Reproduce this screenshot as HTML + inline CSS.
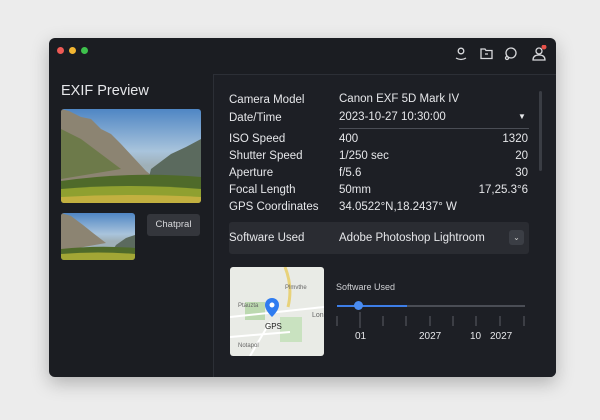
<!DOCTYPE html>
<html><head><style>
*{margin:0;padding:0;box-sizing:border-box}
body{width:600px;height:420px;background:#ececec;font-family:"Liberation Sans",sans-serif;position:relative;overflow:hidden}
.win{position:absolute;left:49px;top:38px;width:507px;height:339px;background:#1b1d22;border-radius:6px;box-shadow:0 6px 18px rgba(0,0,0,.25);overflow:hidden}
.dot{position:absolute;top:9px;width:7px;height:7px;border-radius:50%}
.t{position:absolute;color:#e6e7ea;font-size:11.5px;white-space:nowrap}
.panel{position:absolute;left:164px;top:36px;width:343px;height:303px;background:#1d1f25;border-left:1px solid #2c2f36;border-top:1px solid #2c2f36}
.img{position:absolute;border-radius:3px;overflow:hidden;background:linear-gradient(180deg,#4f86c4 0%,#a9c4dc 45%,#9fb0b8 60%)}
</style></head><body>
<div class="win">
<div class="dot" style="left:8px;background:#ee5a55"></div>
<div class="dot" style="left:20px;background:#f2b532"></div>
<div class="dot" style="left:32px;background:#3ec14c"></div>
<svg style="position:absolute;left:403px;top:7px" width="100" height="18" fill="none" stroke="#d8d9dc" stroke-width="1.3">
<circle cx="9" cy="6" r="2.8"/><path d="M4 13q5 3 10 0"/>
<path d="M29 4h4l1 1.5h6v8h-11z"/><path d="M33 9h3"/>
<circle cx="59" cy="8" r="5"/><circle cx="55" cy="13" r="1.5"/>
<circle cx="87" cy="6" r="3"/><path d="M81 15q0-5 6-5t6 5z"/>
<circle cx="92" cy="2" r="2.5" fill="#e8524a" stroke="none"/>
</svg>
<div class="t" style="left:12px;top:45px;font-size:14.5px">EXIF Preview</div>
<div class="img" style="left:12px;top:71px;width:140px;height:94px">
<svg width="140" height="94"><path d="M0 0L8 2 20 8 30 10 40 20 50 25 60 35 72 48 85 62 95 70 0 80z" fill="#8c8472"/><path d="M0 20L20 30 40 45 60 60 0 70z" fill="#6d7a4a"/><path d="M90 60L110 45 125 38 140 30V80H85z" fill="#5b6a5e"/><path d="M0 72Q70 62 140 68V94H0z" fill="#4f6a2a"/><path d="M0 80Q70 74 140 80V94H0z" fill="#8fa030"/><path d="M0 88Q70 84 140 88V94H0z" fill="#c2b040"/></svg></div>
<div class="img" style="left:12px;top:175px;width:74px;height:47px">
<svg width="74" height="47"><path d="M0 0L10 3 22 12 32 20 45 30 0 38z" fill="#8c8472"/><path d="M55 32L65 25 74 22V40H50z" fill="#5b6a5e"/><path d="M0 36Q37 32 74 35V47H0z" fill="#4f6a2a"/><path d="M0 41Q37 38 74 41V47H0z" fill="#a2a635"/></svg></div>
<div style="position:absolute;left:98px;top:176px;width:53px;height:22px;background:#34363c;border-radius:3px;color:#d8d9dc;font-size:9.5px;text-align:center;line-height:22px">Chatpral</div>
<div class="panel">
<div style="position:absolute;right:14px;top:16px;width:3px;height:80px;background:#3a3d44;border-radius:2px"></div>
<div class="t" style="left:15px;top:19px">Camera Model</div><div class="t" style="left:125px;top:18px">Canon EXF 5D Mark IV</div>
<div class="t" style="left:15px;top:37px">Date/Time</div><div class="t" style="left:125px;top:36px">2023-10-27 10:30:00</div>
<div class="t" style="left:304px;top:37px;font-size:8px">▼</div>
<div style="position:absolute;left:125px;top:53px;width:190px;height:1px;background:#4a4d55"></div>
<div class="t" style="left:15px;top:58px">ISO Speed</div><div class="t" style="left:125px;top:58px">400</div><div class="t" style="right:28px;top:58px">1320</div>
<div class="t" style="left:15px;top:75px">Shutter Speed</div><div class="t" style="left:125px;top:75px">1/250 sec</div><div class="t" style="right:28px;top:75px">20</div>
<div class="t" style="left:15px;top:92px">Aperture</div><div class="t" style="left:125px;top:92px">f/5.6</div><div class="t" style="right:28px;top:92px">30</div>
<div class="t" style="left:15px;top:109px">Focal Length</div><div class="t" style="left:125px;top:109px">50mm</div><div class="t" style="right:28px;top:109px">17,25.3°6</div>
<div class="t" style="left:15px;top:126px">GPS Coordinates</div><div class="t" style="left:125px;top:126px">34.0522°N,18.2437° W</div>
<div style="position:absolute;left:15px;top:147px;width:300px;height:32px;background:#2a2c32;border-radius:3px"></div>
<div class="t" style="left:15px;top:157px">Software Used</div><div class="t" style="left:125px;top:157px">Adobe Photoshop Lightroom</div>
<div style="position:absolute;left:295px;top:155px;width:15px;height:15px;background:#3b3e45;border-radius:3px;color:#ccc;font-size:8px;text-align:center;line-height:15px">⌄</div>
<div style="position:absolute;left:16px;top:192px;width:94px;height:89px;background:#e9ebe6;border-radius:3px;overflow:hidden">
<svg width="94" height="89"><path d="M55 0q8 20 3 40" stroke="#e8d27a" stroke-width="3" fill="none"/><rect x="15" y="35" width="20" height="18" fill="#bcd9b0"/><rect x="50" y="50" width="22" height="25" fill="#c9e2c0"/><path d="M0 50L94 40M20 89L40 55M0 70L60 65" stroke="#fff" stroke-width="2"/>
<text x="8" y="40" font-size="6" fill="#666">Ptauzta</text><text x="55" y="22" font-size="6" fill="#666">Plmvthe</text><text x="8" y="80" font-size="6" fill="#666">Notapol</text><text x="82" y="50" font-size="7" fill="#666">Lon</text>
<path d="M49 38a7 7 0 1 0 -14 0q0 5 7 12q7-7 7-12z" fill="#2f7cf0"/><circle cx="42" cy="38" r="2.5" fill="#fff"/>
<text x="35" y="62" font-size="8" fill="#222" font-family="Liberation Sans">GPS</text></svg></div>
<div class="t" style="left:122px;top:207px;font-size:9px;color:#cfd0d4">Software Used</div>
<div style="position:absolute;left:123px;top:230px;width:188px;height:2px;background:#4a4d55"></div>
<div style="position:absolute;left:123px;top:230px;width:70px;height:2px;background:#3d7ee8"></div>
<div style="position:absolute;left:140px;top:226px;width:9px;height:9px;border-radius:50%;background:#4a8cf0"></div>
<svg style="position:absolute;left:122px;top:237px" width="192" height="16" stroke="#5a5d65" stroke-width="1"><path d="M1 4v10M24 0v16M47 4v10M70 4v10M94 4v10M117 4v10M140 4v10M164 4v10M188 4v10"/></svg>
<div class="t" style="left:141px;top:256px;font-size:10px">01</div>
<div class="t" style="left:205px;top:256px;font-size:10px">2027</div>
<div class="t" style="left:256px;top:256px;font-size:10px">10</div>
<div class="t" style="left:276px;top:256px;font-size:10px">2027</div>
</div>
</div>
</body></html>
